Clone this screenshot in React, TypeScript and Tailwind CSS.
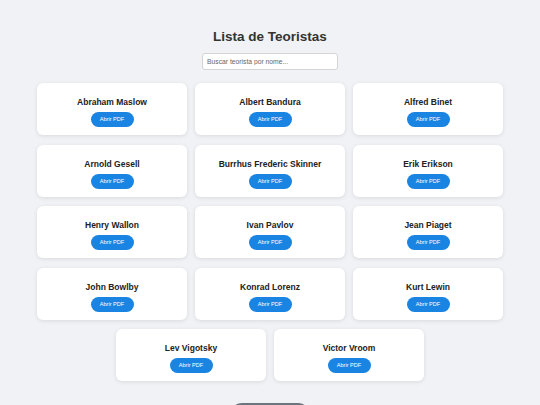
const teoristas = [
  "Abraham Maslow",
  "Albert Bandura",
  "Alfred Binet",
  "Arnold Gesell",
  "Burrhus Frederic Skinner",
  "Erik Erikson",
  "Henry Wallon",
  "Ivan Pavlov",
  "Jean Piaget",
  "John Bowlby",
  "Konrad Lorenz",
  "Kurt Lewin",
  "Lev Vigotsky",
  "Victor Vroom",
];

export default function App() {
  return (
    <div className="min-h-screen bg-[#f0f2f5] pt-[29px] font-['Liberation_Sans',Arial,sans-serif] text-[#333]">
      <h1 className="text-center text-[13.5px] font-bold leading-[16px]">Lista de Teoristas</h1>

      <div className="mt-[8px] flex justify-center">
        <input
          type="text"
          placeholder="Buscar teorista por nome..."
          className="h-[17px] w-[136px] rounded-[3px] border border-[#d4d4d4] bg-white px-[4px] text-[6.75px] text-[#333] outline-none placeholder:text-[#666]"
        />
      </div>

      <div className="mx-auto mt-[13px] flex w-[466px] flex-wrap justify-center gap-x-[8px] gap-y-[9.5px]">
        {teoristas.map((nome) => (
          <div
            key={nome}
            className="flex h-[52px] w-[150px] flex-col items-center rounded-[6px] bg-white pt-[13px] shadow-[0_1px_4px_rgba(0,0,0,0.1)]"
          >
            <h3 className="text-[8.5px] font-bold leading-[12px] text-[#222]">{nome}</h3>
            <button className="mt-[4px] h-[15px] w-[43px] rounded-full bg-[#1a84e2] text-[5.6px] leading-[15px] text-white">
              Abrir PDF
            </button>
          </div>
        ))}
      </div>

      {/* botão de rodapé, só a borda de cima aparece */}
      <div className="mt-[21.5px] flex justify-center pb-[20px]">
        <div className="h-[22px] w-[78px] rounded-full bg-[#6c757d]" />
      </div>
    </div>
  );
}
